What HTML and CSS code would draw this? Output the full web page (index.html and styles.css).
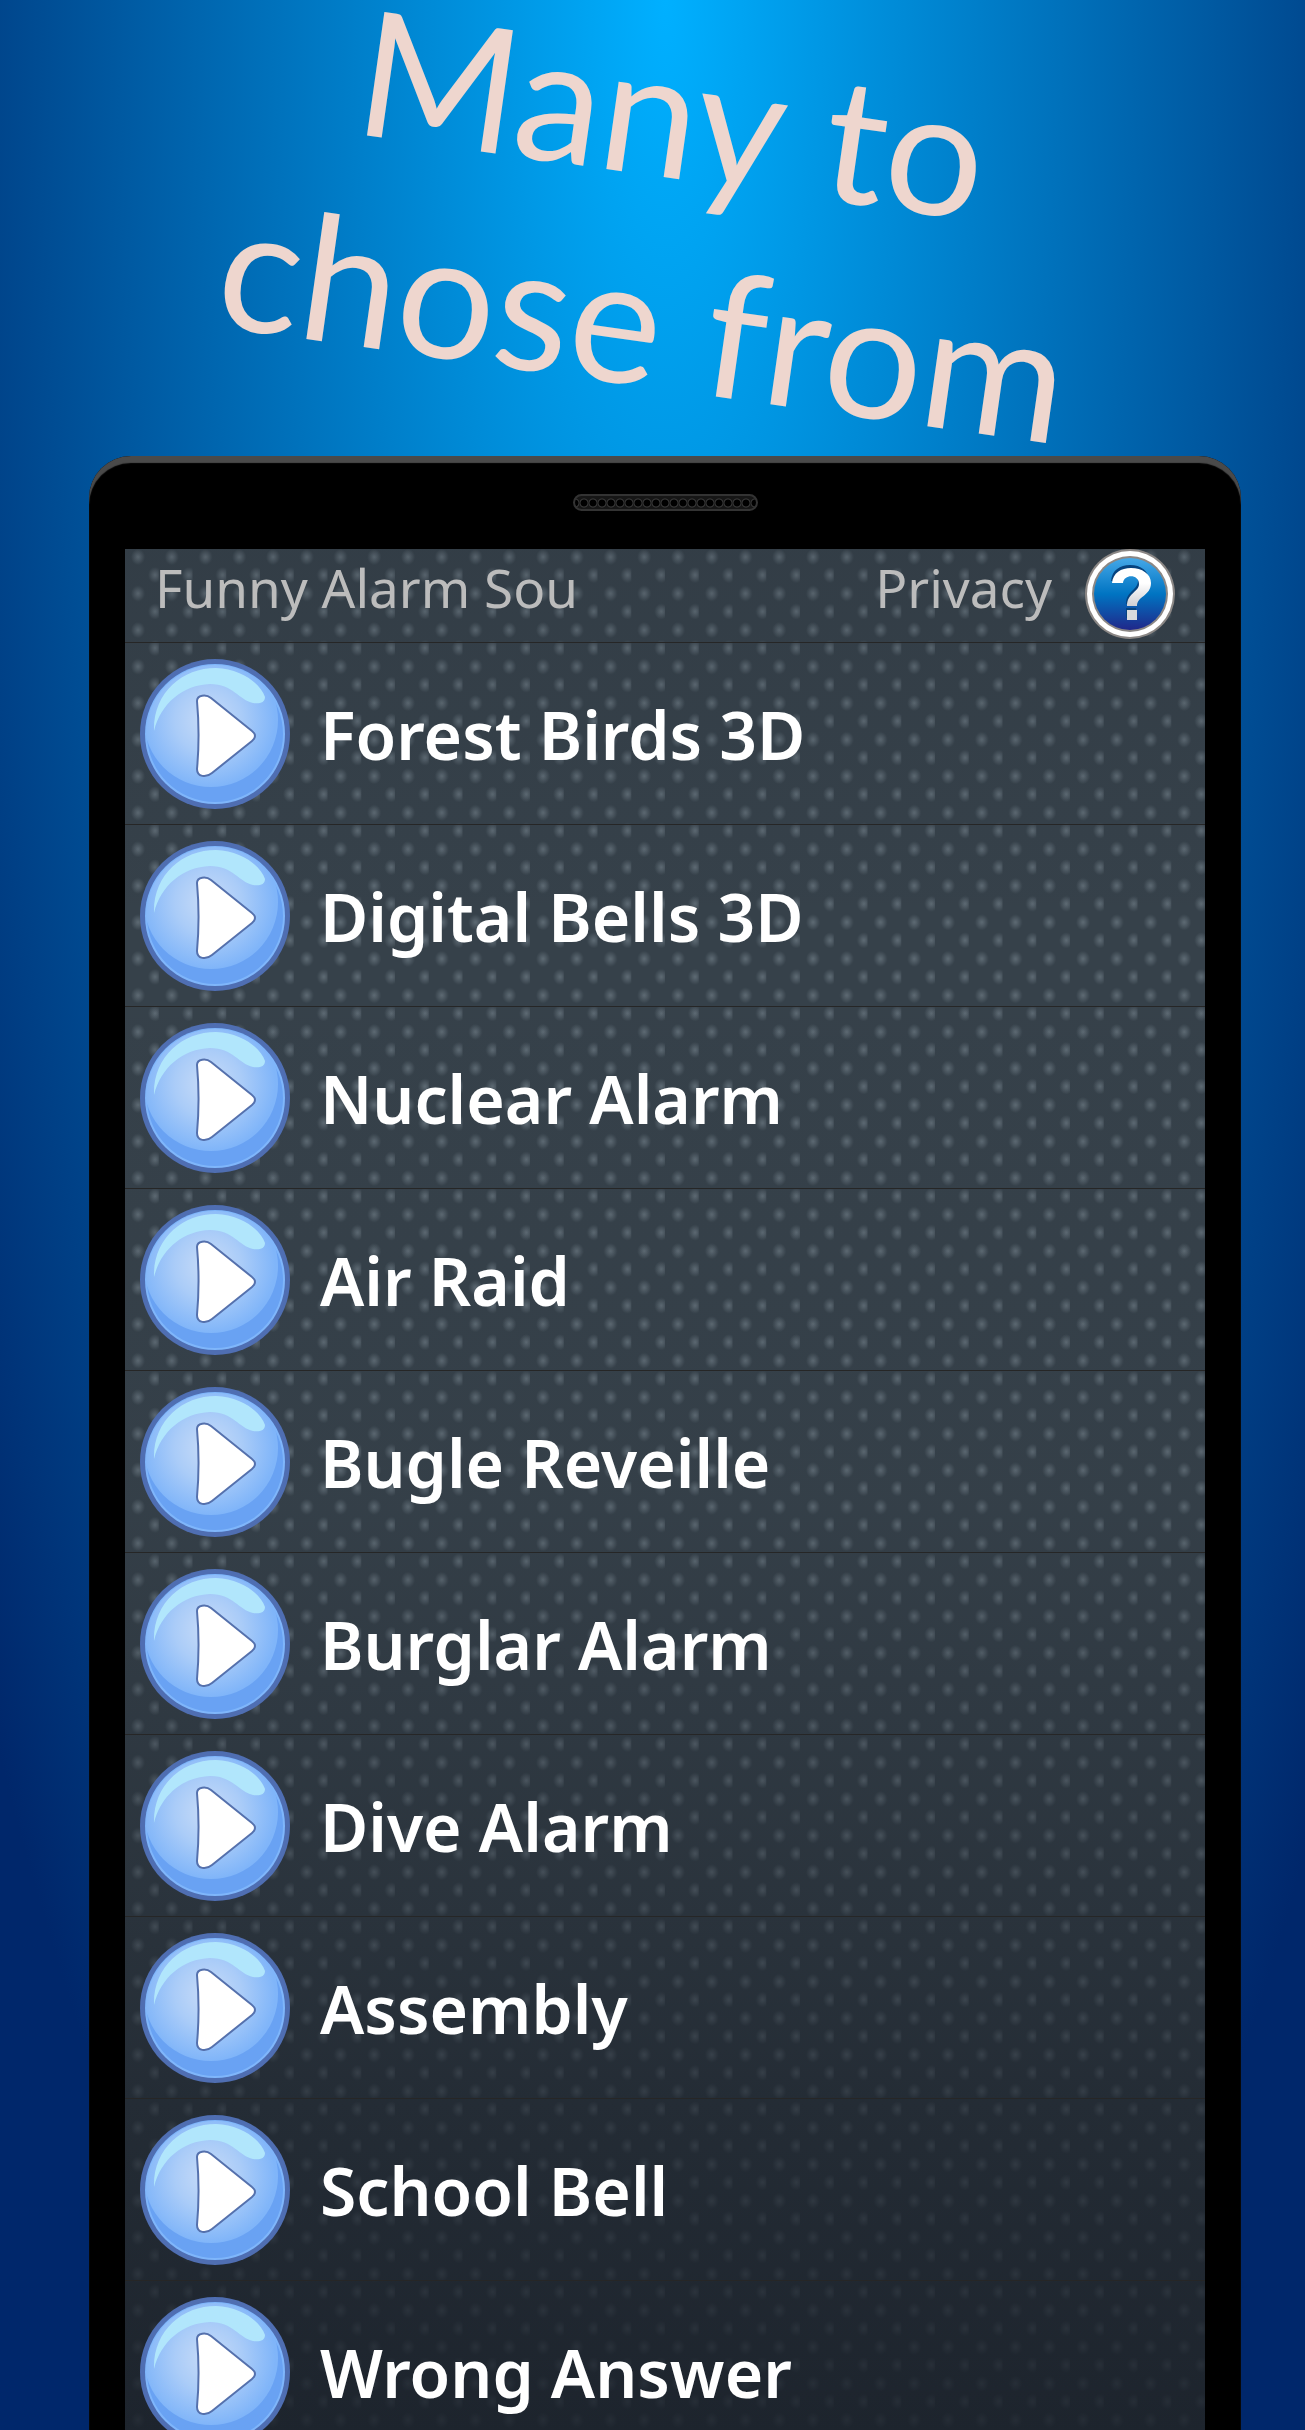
FILE: index.html
```
<!DOCTYPE html>
<html lang="en">
<head>
  <meta charset="UTF-8">
  <meta name="viewport" content="width=device-width, initial-scale=1">
  <title>Funny Alarm Sounds</title>
  <link rel="stylesheet" href="styles.css">
</head>
<body>

<!-- shared icons -->
<svg class="defs" aria-hidden="true">
  <defs>
    <radialGradient id="ball" cx="48%" cy="50%" r="50%">
      <stop offset="0" stop-color="#c9dcf8"/>
      <stop offset="0.5" stop-color="#aaccf8"/>
      <stop offset="1" stop-color="#80b5f9"/>
    </radialGradient>
    <linearGradient id="blue" x1="0" y1="0" x2="0" y2="1">
      <stop offset="0" stop-color="#45a8e8"/>
      <stop offset="0.5" stop-color="#0074c2"/>
      <stop offset="1" stop-color="#20278a"/>
    </linearGradient>
    <linearGradient id="mark" x1="0" y1="0" x2="0" y2="1">
      <stop offset="0.4" stop-color="#ffffff"/>
      <stop offset="1" stop-color="#cfcfd4"/>
    </linearGradient>
    <clipPath id="face"><circle cx="75" cy="75" r="69"/></clipPath>
    <symbol id="play" viewBox="0 0 150 150">
      <circle cx="75" cy="75" r="75" fill="#4f6eb2"/>
      <circle cx="75" cy="75" r="70" fill="#7fb6fb"/>
      <circle cx="75" cy="75" r="68" fill="#69a2f3"/>
      <circle cx="71" cy="61" r="67" fill="url(#ball)" clip-path="url(#face)"/>
      <path d="M14 72C13 34 42 9 76 9C101 10 120 24 125 38C125 44 119 45 113 44C99 41 93 25 70 25C43 26 21 44 14 72Z" fill="#b1e6fc"/>
      <path d="M57 42C57 36 66 35 71 39L112 72C116 75 116 79 112 82L72 114C66 119 57 118 57 110C59 88 59 64 57 42Z" fill="#fff" stroke="#5571ad" stroke-width="2"/>
    </symbol>
    <symbol id="help" viewBox="0 0 90 90">
      <circle cx="45" cy="45" r="45" fill="#8b8785"/>
      <circle cx="45" cy="45" r="43" fill="#fff"/>
      <circle cx="45" cy="45" r="38" fill="#8b8785"/>
      <circle cx="45" cy="45" r="36" fill="url(#blue)"/>
      <g fill="#06437f" transform="translate(-1 -2)">
        <path d="M27 34C28 23 36 18 46 18C57 18 65 24 65 34C65 47 52 47 52 57H42C42 44 54 43 54 34C54 24 38 25 38 34Z"/>
        <path d="M42 61H52V71H42Z"/>
      </g>
      <path d="M27 34C28 24 36 19 46 19C57 19 66 25 66 34C66 47 52 47 52 57H42C42 44 54 43 54 35C54 25 39 25 38 34Z" fill="url(#mark)"/>
      <path d="M42 61H52V71H42Z" fill="#d9dadd"/>
    </symbol>
  </defs>
</svg>

<h1 class="headline">Many to<br>chose from</h1>

<main class="phone">
  <div class="speaker"></div>
  <div class="screen">
    <header class="topbar">
      <span class="title">Funny Alarm Sou</span>
      <a class="privacy" href="#">Privacy</a>
      <button class="help" aria-label="Help"><svg><use href="#help"/></svg></button>
    </header>
    <ul class="sounds">
      <li><button class="play" aria-label="Play Forest Birds 3D"><svg><use href="#play"/></svg></button><span>Forest Birds 3D</span></li>
      <li><button class="play" aria-label="Play Digital Bells 3D"><svg><use href="#play"/></svg></button><span>Digital Bells 3D</span></li>
      <li><button class="play" aria-label="Play Nuclear Alarm"><svg><use href="#play"/></svg></button><span>Nuclear Alarm</span></li>
      <li><button class="play" aria-label="Play Air Raid"><svg><use href="#play"/></svg></button><span>Air Raid</span></li>
      <li><button class="play" aria-label="Play Bugle Reveille"><svg><use href="#play"/></svg></button><span>Bugle Reveille</span></li>
      <li><button class="play" aria-label="Play Burglar Alarm"><svg><use href="#play"/></svg></button><span>Burglar Alarm</span></li>
      <li><button class="play" aria-label="Play Dive Alarm"><svg><use href="#play"/></svg></button><span>Dive Alarm</span></li>
      <li><button class="play" aria-label="Play Assembly"><svg><use href="#play"/></svg></button><span>Assembly</span></li>
      <li><button class="play" aria-label="Play School Bell"><svg><use href="#play"/></svg></button><span>School Bell</span></li>
      <li><button class="play" aria-label="Play Wrong Answer"><svg><use href="#play"/></svg></button><span>Wrong Answer</span></li>
    </ul>
  </div>
</main>

</body>
</html>
```
FILE: styles.css
```
* {
  box-sizing: border-box;
}

body {
  margin: 0;
  height: 100vh;
  overflow: hidden;
  display: flex;
  flex-direction: column;
  font-family: "Noto Sans", sans-serif;
  background: radial-gradient(ellipse 66% 114% at 51% 0, #00b0ff, #00276b);
}

.defs {
  position: absolute;
  width: 0;
  height: 0;
}

.headline {
  margin: 0;
  height: 456px;
  flex: none;
  padding: 4px 0 0 8px;
  color: #eed6ce;
  font-family: Lato, sans-serif;
  font-weight: 400;
  font-size: 174px;
  line-height: 210px;
  text-align: center;
  transform: rotate(8deg);
}

.phone {
  flex: none;
  margin: 0 64px 0 89px;
  padding: 0 36px;
  background: #000;
  border-radius: 42px 42px 0 0;
  box-shadow: inset 0 7px 1px #4a4a4a;
}

.speaker {
  width: 185px;
  height: 17px;
  margin: 38px auto;
  border: 2px solid #333;
  border-radius: 9px;
  background: radial-gradient(circle at 5px 7px, #000 3px, #3c3c3c 4px, #161616 5px) 4px 0 / 9px 13px #161616;
}

/* dotted texture that fades out towards the bottom */
.screen {
  color: #fff;
  background:
    linear-gradient(rgba(23, 29, 38, 0.1), rgba(23, 29, 38, 0) 20%, rgba(23, 29, 38, 0.05) 50%, rgba(23, 29, 38, 0.38) 71%, rgba(23, 29, 38, 0.58) 81%, rgba(23, 29, 38, 0.8) 98%),
    radial-gradient(ellipse 7px 8px at 13px 8px, rgba(150, 165, 175, 0.42), transparent) 0 0 / calc(100% / 32) calc(1900px / 52),
    radial-gradient(ellipse 7px 8px at 30px 26px, rgba(150, 165, 175, 0.42), transparent) 0 0 / calc(100% / 32) calc(1900px / 52),
    #36414a;
}

.topbar {
  display: flex;
  align-items: flex-start;
  height: 93px;
  padding: 0 30px;
  color: #bcbcbc;
  font-size: 53px;
  line-height: 78px;
}

.title {
  flex: 1;
}

.privacy {
  color: inherit;
  text-decoration: none;
}

button {
  padding: 0;
  border: 0;
  background: none;
  cursor: pointer;
}

button svg {
  display: block;
  width: 100%;
  height: 100%;
}

.help {
  width: 90px;
  height: 90px;
  margin-left: 33px;
}

.sounds {
  list-style: none;
  margin: 0;
  padding: 0;
}

.sounds li {
  display: flex;
  align-items: center;
  gap: 30px;
  height: 182px;
  padding: 0 15px;
  border-top: 1px solid #262626;
  font-size: 66px;
  font-weight: 600;
}

.play {
  width: 150px;
  height: 150px;
}
```
